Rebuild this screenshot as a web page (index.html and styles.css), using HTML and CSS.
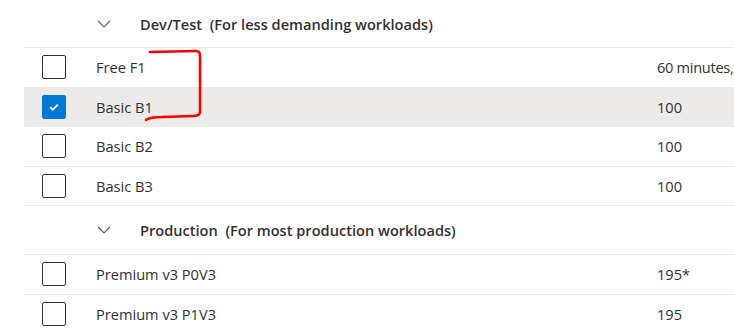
FILE: index.html
```html
<!DOCTYPE html>
<html lang="en">
<head>
  <meta charset="UTF-8">
  <title>Pricing tiers</title>
  <link rel="stylesheet" href="styles.css">
</head>
<body>
  <div class="tier-list">
    <!-- Dev/Test group -->
    <div class="group-header first">
      <svg class="chevron" width="14" height="8" viewBox="0 0 14 8"><path d="M1 1 L7 7 L13 1" fill="none" stroke="#605e5c" stroke-width="1.1"/></svg>
      <span class="group-title">Dev/Test&nbsp;&nbsp;(For less demanding workloads)</span>
    </div>
    <div class="row">
      <span class="check"></span>
      <span class="name">Free F1</span>
      <span class="value tight">60 minutes,</span>
    </div>
    <div class="row selected">
      <span class="check checked">
        <svg width="12" height="10" viewBox="0 0 12 10"><path d="M2.2 5.2 L4.8 7.6 L9.8 2.6" fill="none" stroke="#fff" stroke-width="2"/></svg>
      </span>
      <span class="name">Basic B1</span>
      <span class="value">100</span>
    </div>
    <div class="row">
      <span class="check"></span>
      <span class="name">Basic B2</span>
      <span class="value">100</span>
    </div>
    <div class="row">
      <span class="check"></span>
      <span class="name">Basic B3</span>
      <span class="value">100</span>
    </div>

    <!-- Production group -->
    <div class="group-header">
      <svg class="chevron" width="14" height="8" viewBox="0 0 14 8"><path d="M1 1 L7 7 L13 1" fill="none" stroke="#605e5c" stroke-width="1.1"/></svg>
      <span class="group-title">Production&nbsp;&nbsp;(For most production workloads)</span>
    </div>
    <div class="row">
      <span class="check"></span>
      <span class="name">Premium v3 P0V3</span>
      <span class="value">195*</span>
    </div>
    <div class="row">
      <span class="check"></span>
      <span class="name">Premium v3 P1V3</span>
      <span class="value">195</span>
    </div>
  </div>

  <!-- red hand-drawn mark -->
  <svg class="annotation" width="734" height="329" viewBox="0 0 734 329">
    <path d="M150 52 L196 51 Q200 51 200 56 L200 112 Q200 116 193 116 L162 117 Q150 117 146 120" fill="none" stroke="#f00" stroke-width="2.6" stroke-linecap="round" stroke-linejoin="round"/>
  </svg>
</body>
</html>
```

FILE: styles.css
```css
body {
    margin: 0;
    background: #fff;
    font-family: "Open Sans", "Noto Sans", sans-serif;
    color: #323130;
    overflow: hidden;
}

.tier-list {
    margin-left: 24px;
}

.group-header {
    height: 48px;
    display: flex;
    align-items: center;
    border-bottom: 1px solid #edebe9;
    white-space: nowrap;
}

.group-header.first {
    height: 47px;
}

.chevron {
    flex: none;
    margin-left: 73px;
    margin-right: 29px;
}

.group-title {
    font-size: 14.6px;
    font-weight: 600;
}

.row {
    height: 38.5px;
    display: flex;
    align-items: center;
    border-bottom: 1px solid #edebe9;
    font-size: 14.6px;
    white-space: nowrap;
}

.row.selected {
    background: #edebe9;
}

.check {
    flex: none;
    box-sizing: border-box;
    width: 24px;
    height: 24px;
    margin-left: 18px;
    border: 1px solid #323130;
    border-radius: 2px;
    display: flex;
    align-items: center;
    justify-content: center;
}

.check.checked {
    background: #0078d4;
    border-color: #0078d4;
}

.name {
    flex: none;
    margin-left: 30px;
    width: 561px;
}

.value {
    flex: none;
}

.value.tight {
    letter-spacing: -0.3px;
}

.annotation {
    position: absolute;
    left: 0;
    top: 0;
    pointer-events: none;
}
```
